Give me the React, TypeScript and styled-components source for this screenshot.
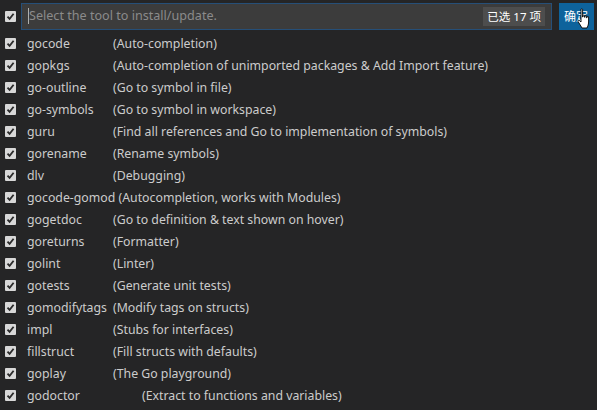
import React from "react";
import styled, { createGlobalStyle } from "styled-components";

const Global = createGlobalStyle`
  html, body { margin: 0; padding: 0; background: #252526; }
  body { font-family: "Segoe UI", "Noto Sans", "Noto Sans CJK SC", sans-serif; }
`;

const Panel = styled.div`
  width: 597px;
  height: 410px;
  background: #252526;
  color: #cccccc;
  font-size: 12.3px;
  overflow: hidden;
`;

const Header = styled.div`
  display: flex;
  align-items: center;
  height: 33px;
  padding: 0 3px 1px 5px;
  box-sizing: border-box;
  margin-bottom: -1px;
`;

const Box = styled.span<{ $gap: number }>`
  flex: none;
  width: 11px;
  height: 11px;
  background: #d8d8d8;
  border-radius: 1px;
  display: flex;
  align-items: center;
  justify-content: center;
  margin-right: ${(p) => p.$gap}px;
`;

const InputBox = styled.div`
  flex: 1;
  height: 27px;
  display: flex;
  align-items: center;
  background: #3c3c3c;
  border: 1px solid #264f78;
  box-sizing: border-box;
  padding: 0 6px 0 6px;
  margin-right: 7px;
`;

const Placeholder = styled.span`
  flex: 1;
  color: #8b8b8b;
  border-left: 1px solid #aeafad;
  line-height: 16px;
  font-size: 12.6px;
`;

const Badge = styled.span`
  background: #4d4d4d;
  color: #ffffff;
  font-size: 11.5px;
  padding: 1px 4px;
  line-height: 17px;
`;

const Button = styled.button`
  position: relative;
  flex: none;
  width: 35px;
  height: 27px;
  border: none;
  background: #0e639c;
  color: #ffffff;
  font: inherit;
  font-size: 12px;
  text-align: left;
  padding: 0 0 0 5px;
`;

const Cursor = styled.svg`
  position: absolute;
  left: 18px;
  top: 5px;
`;

const List = styled.div`
  display: flex;
  flex-direction: column;
`;

const Row = styled.div`
  display: flex;
  align-items: center;
  height: 22px;
  padding-left: 5px;
  white-space: pre;
`;

const Name = styled.span<{ $w: number }>`
  display: inline-block;
  min-width: ${(p) => p.$w}px;
`;

const Desc = styled.span``;

const Check = ({ gap }: { gap: number }) => (
  <Box $gap={gap}>
    <svg width="9" height="9" viewBox="0 0 9 9">
      <path d="M1.5 4.6 L3.6 6.8 L7.6 1.8" fill="none" stroke="#2a2a2a" strokeWidth="1.8" />
    </svg>
  </Box>
);

const tools: [string, string, number?][] = [
  ["gocode", "(Auto-completion)"],
  ["gopkgs", "(Auto-completion of unimported packages & Add Import feature)"],
  ["go-outline", "(Go to symbol in file)"],
  ["go-symbols", "(Go to symbol in workspace)"],
  ["guru", "(Find all references and Go to implementation of symbols)"],
  ["gorename", "(Rename symbols)"],
  ["dlv", "(Debugging)"],
  ["gocode-gomod", "(Autocompletion, works with Modules)"],
  ["gogetdoc", "(Go to definition & text shown on hover)"],
  ["goreturns", "(Formatter)"],
  ["golint", "(Linter)"],
  ["gotests", "(Generate unit tests)"],
  ["gomodifytags", "(Modify tags on structs)"],
  ["impl", "(Stubs for interfaces)"],
  ["fillstruct", "(Fill structs with defaults)"],
  ["goplay", "(The Go playground)"],
  ["godoctor", "(Extract to functions and variables)", 115],
];

export default function App() {
  return (
    <Panel>
      <Global />
      <Header>
        <Check gap={5} />
        <InputBox>
          <Placeholder>Select the tool to install/update.</Placeholder>
          <Badge>已选 17 项</Badge>
        </InputBox>
        <Button>
          确定
          <Cursor width="16" height="22" viewBox="0 0 16 22">
            <path
              d="M4 1.5 C4 0.7 5.6 0.7 5.6 1.5 L5.6 9 L6 9 L6 7.5 C6 6.8 7.6 6.8 7.6 7.5 L7.6 9.3 L8 9.3 L8 8.2 C8 7.5 9.6 7.5 9.6 8.2 L9.6 9.8 L10 9.8 L10 9 C10 8.3 11.6 8.3 11.6 9 L11.6 14 C11.6 17 10.5 18.5 10 20 L5 20 C4 18 2.5 16 1 13.5 C0.5 12.6 1.7 11.8 2.5 12.6 L4 14 Z"
              fill="#ffffff"
              stroke="#000000"
              strokeWidth="0.9"
            />
          </Cursor>
        </Button>
      </Header>
      <List>
        {tools.map(([name, desc, w]) => (
          <Row key={name}>
            <Check gap={11} />
            <Name $w={w ?? 86}>{name} </Name>
            <Desc>{desc}</Desc>
          </Row>
        ))}
      </List>
    </Panel>
  );
}
